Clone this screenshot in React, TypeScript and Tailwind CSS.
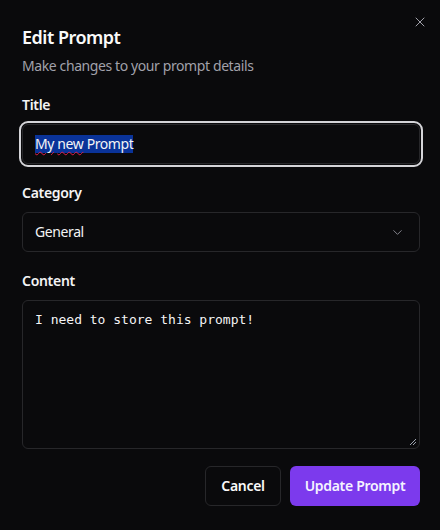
import { X, ChevronDown } from "lucide-react";

const Label = ({ children }: { children: string }) => (
  <label className="block text-sm font-semibold leading-5 tracking-[-0.3px] text-[#f4f4f5]">
    {children}
  </label>
);

export default function App() {
  return (
    <div className="relative w-[440px] h-[530px] bg-[#0a0a0c] pl-[22px] pr-[20px] pt-[23px] font-['Noto_Sans',sans-serif] text-[#fafafa] overflow-hidden">
      <button className="absolute right-[12px] top-[14px] text-[#a1a1aa]">
        <X size={16} strokeWidth={1.5} />
      </button>

      <h2 className="text-lg font-semibold leading-7 tracking-[-0.5px]">Edit Prompt</h2>
      <p className="mt-[5px] text-sm leading-5 tracking-[-0.4px] text-[#a1a1aa]">
        Make changes to your prompt details
      </p>

      <div className="mt-[19px]">
        <Label>Title</Label>
        <div className="mt-[9px] h-10 w-full rounded-md border border-[#27272a] bg-[#0a0a0c] px-3 flex items-center outline-2 outline-offset-1 outline-[#d4d4d8]">
          <span className="text-sm leading-[18px] tracking-[-0.4px] bg-[#0a3399] text-[#f4f4f5]">
            <span className="underline decoration-wavy decoration-[#e11d48] decoration-1 underline-offset-2">My</span>{" "}
            <span className="underline decoration-wavy decoration-[#e11d48] decoration-1 underline-offset-2">new</span>{" "}
            Prompt
          </span>
        </div>
      </div>

      <div className="mt-[19px]">
        <Label>Category</Label>
        <div className="mt-[9px] h-10 w-full rounded-md border border-[#27272a] px-3 flex items-center justify-between">
          <span className="text-sm tracking-[-0.4px] text-[#f4f4f5]">General</span>
          <ChevronDown size={15} strokeWidth={1.5} className="text-[#8a8a93] mr-[2px]" />
        </div>
      </div>

      <div className="mt-[19px]">
        <Label>Content</Label>
        <div className="relative mt-[9px] h-[149px] w-full rounded-md border border-[#27272a] px-3 pt-[5px]">
          <span className="font-['DejaVu_Sans_Mono',monospace] text-[13px] leading-5 text-[#f4f4f5]">
            I need to store this prompt!
          </span>
          <svg className="absolute right-[2px] bottom-[2px]" width="8" height="8" viewBox="0 0 8 8">
            <path d="M7 1L1 7M7 4L4 7" stroke="#9ca3af" strokeWidth="1" />
          </svg>
        </div>
      </div>

      <div className="mt-[17px] flex justify-end gap-[9px]">
        <button className="h-10 w-[76px] rounded-md border border-[#27272a] text-sm font-semibold tracking-[-0.3px] text-[#fafafa]">
          Cancel
        </button>
        <button className="h-10 w-[130px] rounded-md bg-[#7c3aed] text-sm font-semibold tracking-[-0.3px] text-[#f5f3ff]">
          Update Prompt
        </button>
      </div>
    </div>
  );
}
